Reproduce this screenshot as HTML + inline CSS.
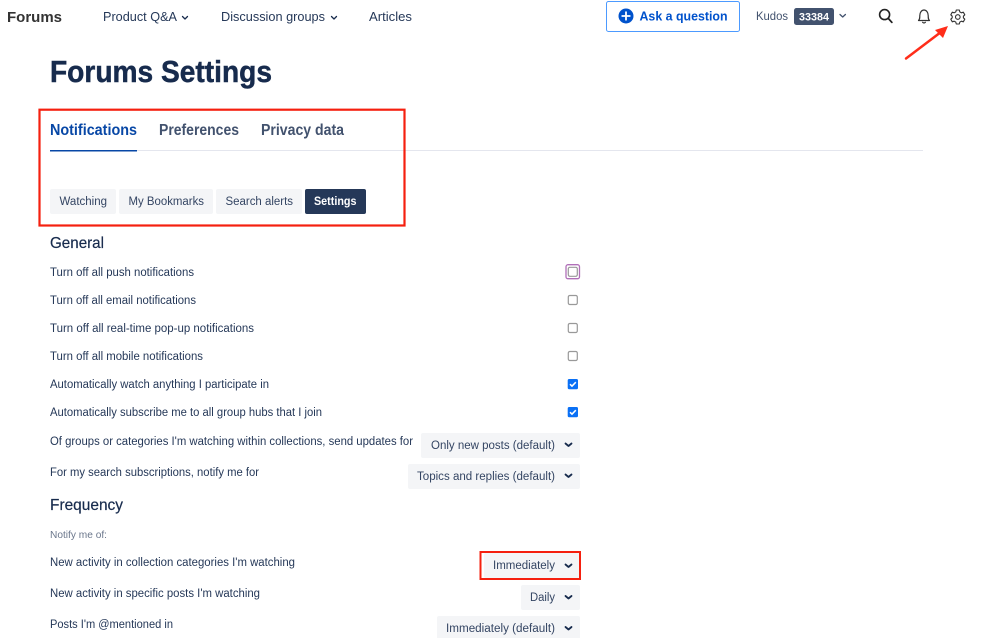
<!DOCTYPE html>
<html lang="en"><head><meta charset="utf-8"><title>Forums Settings</title>
<style>
html,body{margin:0;padding:0;background:#fff;width:999px;height:638px;overflow:hidden}
svg{display:block;filter:blur(.3px)}
text{font-family:"Liberation Sans",sans-serif;}
.r{font-size:11.5px;fill:#253858}
.s{font-size:11.5px;fill:#344563}
.n{font-size:12.5px;fill:#253858}
.h{font-size:16px;fill:#172b4d;stroke:#172b4d;stroke-width:.2}
.c{fill:none;stroke:#172b4d;stroke-width:1.8;stroke-linecap:round;stroke-linejoin:round}
.dd{fill:#f4f5f7}
.cb{fill:#fff;stroke:#999;stroke-width:1.2}
</style></head><body>
<svg width="999" height="638" viewBox="0 0 999 638" xmlns="http://www.w3.org/2000/svg">
<rect width="999" height="638" fill="#fff"/>
<text x="7" y="22" font-size="14.5" font-weight="700" fill="#333" textLength="55" lengthAdjust="spacingAndGlyphs">Forums</text>
<text class="n" x="103" y="21" textLength="74" lengthAdjust="spacingAndGlyphs">Product Q&amp;A</text>
<path d="M182.500 16.500l2.500 2.500 2.500-2.500" fill="none" stroke="#172b4d" stroke-width="1.300" stroke-linecap="round" stroke-linejoin="round"/>
<text class="n" x="221" y="21" textLength="104" lengthAdjust="spacingAndGlyphs">Discussion groups</text>
<path d="M331.500 16.500l2.500 2.500 2.500-2.500" fill="none" stroke="#172b4d" stroke-width="1.300" stroke-linecap="round" stroke-linejoin="round"/>
<text class="n" x="369" y="21" textLength="43" lengthAdjust="spacingAndGlyphs">Articles</text>

<rect x="606.500" y="1.500" width="133" height="30" rx="2" fill="#fff" stroke="#4c9aff"/>
<circle cx="626" cy="16" r="7.500" fill="#0052cc"/>
<path d="M626 12.200v7.600M622.200 16h7.600" stroke="#fff" stroke-width="1.800" stroke-linecap="round"/>
<text x="639.500" y="20.500" font-size="13" font-weight="700" fill="#0052cc" textLength="88" lengthAdjust="spacingAndGlyphs">Ask a question</text>
<text x="756" y="20" font-size="12" fill="#42526e" textLength="32" lengthAdjust="spacingAndGlyphs">Kudos</text>
<rect x="794" y="8" width="40" height="17" rx="2.500" fill="#42526e"/>
<text x="799" y="20.500" font-size="11" font-weight="700" fill="#fff" textLength="30" lengthAdjust="spacingAndGlyphs">33384</text>
<path d="M840 14.500l2.700 2.500 2.700-2.500" fill="none" stroke="#42526e" stroke-width="1.300" stroke-linecap="round" stroke-linejoin="round"/>
<circle cx="884.600" cy="14.600" r="5" fill="none" stroke="#222" stroke-width="1.600"/>
<path d="M888.200 18.300l3.600 4" stroke="#222" stroke-width="1.800" stroke-linecap="round"/>
<path d="M918.500 20.500c1.300-1.200 1.300-2.400 1.300-5 0-3 1.800-5.500 4.200-5.500s4.200 2.500 4.200 5.500c0 2.600 0 3.800 1.300 5z" fill="none" stroke="#333" stroke-width="1.200" stroke-linejoin="round"/>
<path d="M922.600 22.300c.7.900 2.100.900 2.800 0" fill="none" stroke="#333" stroke-width="1.200" stroke-linecap="round"/>
<path d="M956.300 10h3l.5 1.900 1.600.9 1.900-.6 1.500 2.600-1.400 1.400v1.600l1.400 1.400-1.500 2.600-1.900-.6-1.600.9-.5 1.900h-3l-.5-1.900-1.600-.9-1.900.6-1.500-2.600 1.400-1.400v-1.600l-1.400-1.400 1.500-2.600 1.900.6 1.600-.9z" fill="none" stroke="#333" stroke-width="1.100" stroke-linejoin="round"/>
<circle cx="957.800" cy="17" r="2.300" fill="none" stroke="#333" stroke-width="1.100"/>
<path d="M906 58.500L941 32" stroke="#ff2d1a" stroke-width="2.500" stroke-linecap="round"/>
<path d="M948 26l-13 4 8 8z" fill="#ff2d1a"/>

<text x="50" y="82" font-size="31" font-weight="700" fill="#172b4d" stroke="#172b4d" stroke-width=".5" textLength="222" lengthAdjust="spacingAndGlyphs">Forums Settings</text>

<text x="50" y="135" font-size="15.500" font-weight="700" fill="#0747a6" textLength="87" lengthAdjust="spacingAndGlyphs">Notifications</text>
<text x="159" y="135" font-size="15.500" font-weight="700" fill="#42526e" textLength="80" lengthAdjust="spacingAndGlyphs">Preferences</text>
<text x="261" y="135" font-size="15.500" font-weight="700" fill="#42526e" textLength="83" lengthAdjust="spacingAndGlyphs">Privacy data</text>
<rect x="50" y="150" width="873" height="1" fill="#e4e6ee"/>
<rect x="50" y="150" width="87" height="1.500" fill="#0747a6"/>

<rect x="50" y="189" width="66" height="25" rx="2" class="dd"/>
<rect x="119" y="189" width="94" height="25" rx="2" class="dd"/>
<rect x="216" y="189" width="86" height="25" rx="2" class="dd"/>
<rect x="305" y="189" width="61" height="25" rx="2" fill="#253858"/>
<text class="s" x="59.500" y="205" textLength="47.500" lengthAdjust="spacingAndGlyphs">Watching</text>
<text class="s" x="128.500" y="205" textLength="75.500" lengthAdjust="spacingAndGlyphs">My Bookmarks</text>
<text class="s" x="225.500" y="205" textLength="67.500" lengthAdjust="spacingAndGlyphs">Search alerts</text>
<text x="314" y="205" font-size="11.500" font-weight="700" fill="#fff" textLength="42.500" lengthAdjust="spacingAndGlyphs">Settings</text>
<rect x="39.500" y="109.700" width="365" height="115.800" fill="none" stroke="#f5200f" stroke-width="2.200"/>

<text class="h" x="50" y="248" textLength="54" lengthAdjust="spacingAndGlyphs">General</text>
<text class="r" x="50" y="276" textLength="144" lengthAdjust="spacingAndGlyphs">Turn off all push notifications</text>
<text class="r" x="50" y="304" textLength="146" lengthAdjust="spacingAndGlyphs">Turn off all email notifications</text>
<text class="r" x="50" y="332" textLength="204" lengthAdjust="spacingAndGlyphs">Turn off all real-time pop-up notifications</text>
<text class="r" x="50" y="360" textLength="153" lengthAdjust="spacingAndGlyphs">Turn off all mobile notifications</text>
<text class="r" x="50" y="388" textLength="219" lengthAdjust="spacingAndGlyphs">Automatically watch anything I participate in</text>
<text class="r" x="50" y="416" textLength="272" lengthAdjust="spacingAndGlyphs">Automatically subscribe me to all group hubs that I join</text>
<text class="r" x="50" y="445" textLength="363" lengthAdjust="spacingAndGlyphs">Of groups or categories I'm watching within collections, send updates for</text>
<text class="r" x="50" y="476" textLength="209" lengthAdjust="spacingAndGlyphs">For my search subscriptions, notify me for</text>

<rect x="566" y="264.700" width="13.500" height="14" rx="2" fill="#fff" stroke="#b06fb8" stroke-width="1.300"/>
<rect x="568.300" y="267.300" width="9" height="9" rx="1.500" class="cb"/>
<rect x="568.300" y="295.500" width="9" height="9" rx="1.500" class="cb"/>
<rect x="568.300" y="323.500" width="9" height="9" rx="1.500" class="cb"/>
<rect x="568.300" y="351.500" width="9" height="9" rx="1.500" class="cb"/>
<rect x="567.700" y="379" width="10.300" height="10.300" rx="1.500" fill="#0a70f5"/>
<path d="M570 384.200l2 2 3.800-4" fill="none" stroke="#fff" stroke-width="1.500"/>
<rect x="567.700" y="407" width="10.300" height="10.300" rx="1.500" fill="#0a70f5"/>
<path d="M570 412.200l2 2 3.800-4" fill="none" stroke="#fff" stroke-width="1.500"/>

<rect x="421" y="433" width="159" height="25" rx="2" class="dd"/>
<text class="s" x="431" y="449" textLength="124" lengthAdjust="spacingAndGlyphs">Only new posts (default)</text>
<path class="c" d="M565.500 443.500l3 2.500 3-2.500"/>
<rect x="408" y="464" width="172" height="25" rx="2" class="dd"/>
<text class="s" x="417" y="480" textLength="138" lengthAdjust="spacingAndGlyphs">Topics and replies (default)</text>
<path class="c" d="M565.500 474.500l3 2.500 3-2.500"/>

<text class="h" x="50" y="510" textLength="73" lengthAdjust="spacingAndGlyphs">Frequency</text>
<text x="50" y="538" font-size="10" fill="#6b778c" textLength="57" lengthAdjust="spacingAndGlyphs">Notify me of:</text>
<text class="r" x="50" y="566" textLength="245" lengthAdjust="spacingAndGlyphs">New activity in collection categories I'm watching</text>
<text class="r" x="50" y="597" textLength="210" lengthAdjust="spacingAndGlyphs">New activity in specific posts I'm watching</text>
<text class="r" x="50" y="628" textLength="123" lengthAdjust="spacingAndGlyphs">Posts I'm @mentioned in</text>

<rect x="484" y="553" width="96" height="25" rx="2" class="dd"/>
<text class="s" x="493" y="569" textLength="62" lengthAdjust="spacingAndGlyphs">Immediately</text>
<path class="c" d="M565.500 564.500l3 2.500 3-2.500"/>
<rect x="480.500" y="552" width="99.500" height="27" fill="none" stroke="#f5200f" stroke-width="2"/>
<rect x="521" y="585" width="59" height="25" rx="2" class="dd"/>
<text class="s" x="530" y="601" textLength="25" lengthAdjust="spacingAndGlyphs">Daily</text>
<path class="c" d="M565.500 596l3 2.500 3-2.500"/>
<rect x="437" y="616" width="143" height="25" rx="2" class="dd"/>
<text class="s" x="446" y="632" textLength="109" lengthAdjust="spacingAndGlyphs">Immediately (default)</text>
<path class="c" d="M565.500 627l3 2.500 3-2.500"/>
</svg>
</body></html>
